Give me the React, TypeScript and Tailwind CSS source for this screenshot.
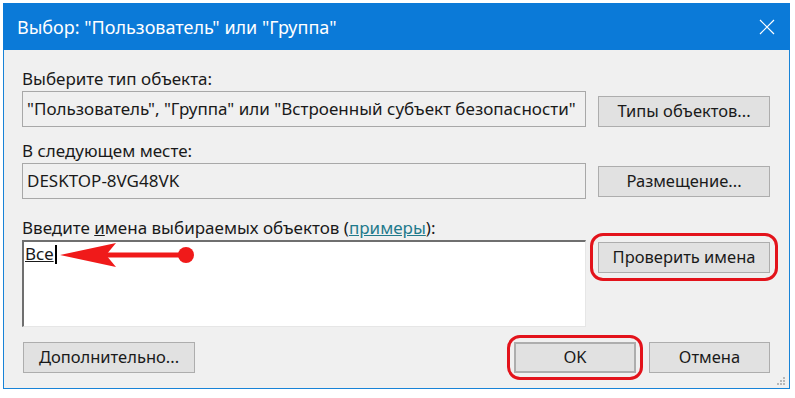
import React from "react";

const font = { fontFamily: '"Noto Sans", "Open Sans", "Liberation Sans", sans-serif' };

function Btn({ children, className = "" }: { children: React.ReactNode; className?: string }) {
  return (
    <div
      className={`flex items-center justify-center bg-[#e1e1e1] border border-[#adadad] text-[16.5px] text-[#1a1a1a] ${className}`}
    >
      {children}
    </div>
  );
}

export default function App() {
  return (
    <div className="w-[795px] h-[398px] bg-white pt-[3px] pl-[3px] overflow-hidden" style={font}>
      <div className="relative w-[787px] h-[386px] bg-[#f0f0f0] border border-[#1883d7] border-t-0 flex flex-col">
        {/* title bar */}
        <div className="h-[47px] bg-[#0b7ad8] flex items-center justify-between pl-[14px] pr-[14px] -mx-px">
          <span className="text-white text-[18px] leading-none">Выбор: "Пользователь" или "Группа"</span>
          <svg width="16" height="16" viewBox="0 0 16 16" className="mr-[1px]">
            <path d="M1 1 L15 15 M15 1 L1 15" stroke="white" strokeWidth="1.2" />
          </svg>
        </div>

        <div className="flex flex-col pl-[18px] pr-[19px] text-[17px] text-[#1a1a1a]">
          <div className="mt-[18px] leading-[22px]">Выберите тип объекта:</div>
          <div className="flex mt-[1px]">
            <div className="w-[564px] h-[36px] border border-[#a8a8a8] bg-[#f0f0f0] flex items-center pl-[4px] whitespace-nowrap overflow-hidden">
              "Пользователь", "Группа" или "Встроенный субъект безопасности"
            </div>
            <Btn className="ml-[12px] w-[172px] h-[31px] self-end">Типы объектов...</Btn>
          </div>

          <div className="mt-[13px] leading-[22px]">В следующем месте:</div>
          <div className="flex items-center mt-[1px]">
            <div className="w-[564px] h-[36px] border border-[#a8a8a8] bg-[#f0f0f0] flex items-center pl-[4px]">
              DESKTOP-8VG48VK
            </div>
            <Btn className="ml-[12px] w-[172px] h-[31px]">Размещение...</Btn>
          </div>

          <div className="mt-[18px] leading-[22px]">
            Введите <span className="underline">и</span>мена выбираемых объектов (
            <span className="text-[#1f7a8c] underline">примеры</span>):
          </div>
          <div className="flex mt-[1px]">
            <div className="relative w-[564px] h-[87px] bg-white border-t-2 border-l-2 border-[#6f6f6f] border-r border-b border-r-[#e6e6e6] border-b-[#e6e6e6]">
              <div className="flex items-center mt-[2px] ml-[1px] leading-[20px]">
                <span className="underline">Все</span>
                <span className="w-[2px] h-[19px] bg-black ml-[1px]" />
              </div>
              {/* red arrow annotation */}
              <svg className="absolute left-[34px] top-[0px]" width="140" height="30" viewBox="0 0 140 30">
                <path d="M2 13 L58 1 L48 13 L58 25 Z" fill="#f01a1a" />
                <rect x="48" y="10.5" width="80" height="5" fill="#f01a1a" />
                <circle cx="128" cy="13" r="8" fill="#f01a1a" />
              </svg>
            </div>
            <div className="relative ml-[12px] mt-[2px] self-start">
              <Btn className="w-[172px] h-[31px]">Проверить имена</Btn>
              <div className="absolute -left-[8px] -top-[9px] w-[188px] h-[48px] rounded-[13px] border-[3px] border-[#e3131b]" />
            </div>
          </div>

          <div className="flex mt-[15px]">
            <Btn className="w-[172px] h-[31px] ml-[1px]">Дополнительно...</Btn>
            <div className="flex-1" />
            <div className="relative">
              <Btn className="w-[122px] h-[31px] border-2 border-[#0b7ad8]">OK</Btn>
              <div className="absolute -left-[7px] -top-[7px] w-[136px] h-[45px] rounded-[13px] border-[3px] border-[#e3131b]" />
            </div>
            <Btn className="ml-[13px] w-[121px] h-[31px]">Отмена</Btn>
          </div>
        </div>

        {/* size grip */}
        <svg className="absolute right-[3px] bottom-[2px]" width="10" height="10" viewBox="0 0 10 10">
          <rect x="7" y="1" width="2" height="2" fill="#b8b8b8" />
          <rect x="4" y="4" width="2" height="2" fill="#b8b8b8" />
          <rect x="7" y="4" width="2" height="2" fill="#b8b8b8" />
          <rect x="1" y="7" width="2" height="2" fill="#b8b8b8" />
          <rect x="4" y="7" width="2" height="2" fill="#b8b8b8" />
          <rect x="7" y="7" width="2" height="2" fill="#b8b8b8" />
        </svg>
      </div>
    </div>
  );
}
